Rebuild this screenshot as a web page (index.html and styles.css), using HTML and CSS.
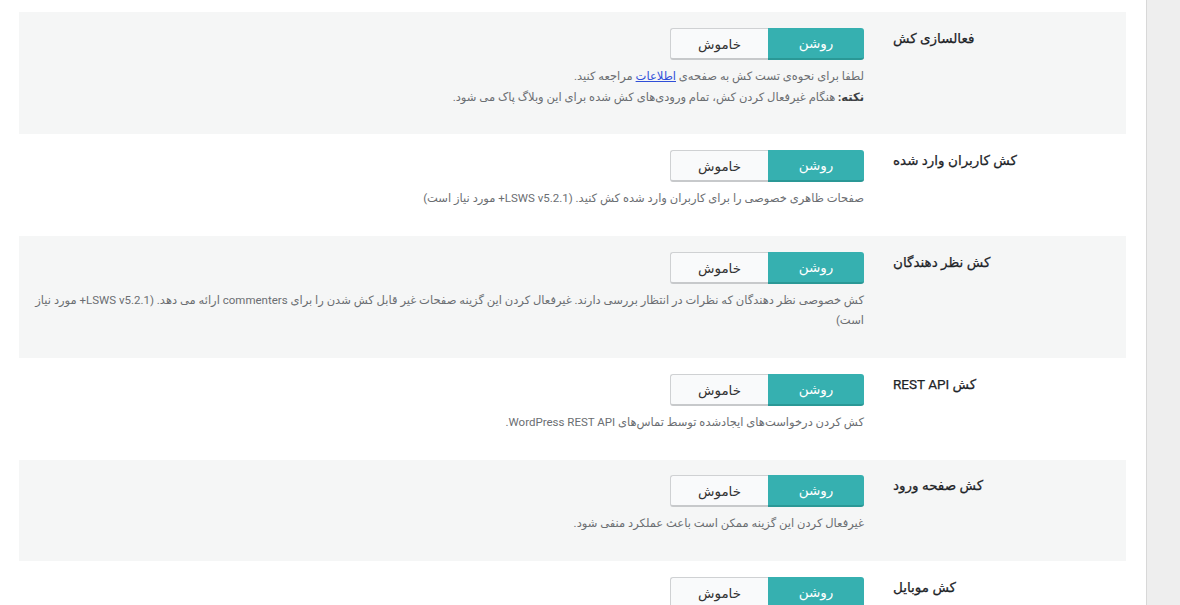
FILE: index.html
```html
<!DOCTYPE html>
<html lang="fa" dir="rtl">
<head>
<meta charset="utf-8">
<link rel="stylesheet" href="styles.css">
</head>
<body>
<div class="page">
  <aside class="side"></aside>
  <main class="main">
    <div class="row alt first">
      <div class="label">فعالسازی کش</div>
      <div class="field">
        <div class="toggle"><span class="on">روشن</span><span class="off">خاموش</span></div>
        <div class="desc">
          <p>لطفا برای نحوه‌ی تست کش به صفحه‌ی <a href="#">اطلاعات</a> مراجعه کنید.</p>
          <p><b>نکته:</b> هنگام غیرفعال کردن کش، تمام ورودی‌های کش شده برای این وبلاگ پاک می شود.</p>
        </div>
      </div>
    </div>
    <div class="row">
      <div class="label">کش کاربران وارد شده</div>
      <div class="field">
        <div class="toggle"><span class="on">روشن</span><span class="off">خاموش</span></div>
        <div class="desc"><p>صفحات ظاهری خصوصی را برای کاربران وارد شده کش کنید. (LSWS v5.2.1+ مورد نیاز است)</p></div>
      </div>
    </div>
    <div class="row alt">
      <div class="label">کش نظر دهندگان</div>
      <div class="field">
        <div class="toggle"><span class="on">روشن</span><span class="off">خاموش</span></div>
        <div class="desc"><p>کش خصوصی نظر دهندگان که نظرات در انتظار بررسی دارند. غیرفعال کردن این گزینه صفحات غیر قابل کش شدن را برای commenters ارائه می دهد. (LSWS v5.2.1+ مورد نیاز است)</p></div>
      </div>
    </div>
    <div class="row">
      <div class="label">کش REST API</div>
      <div class="field">
        <div class="toggle"><span class="on">روشن</span><span class="off">خاموش</span></div>
        <div class="desc"><p>کش کردن درخواست‌های ایجادشده توسط تماس‌های WordPress REST API.</p></div>
      </div>
    </div>
    <div class="row alt short">
      <div class="label">کش صفحه ورود</div>
      <div class="field">
        <div class="toggle"><span class="on">روشن</span><span class="off">خاموش</span></div>
        <div class="desc"><p>غیرفعال کردن این گزینه ممکن است باعث عملکرد منفی شود.</p></div>
      </div>
    </div>
    <div class="row">
      <div class="label">کش موبایل</div>
      <div class="field">
        <div class="toggle"><span class="on">روشن</span><span class="off">خاموش</span></div>
        <div class="desc"><p>ارائه نسخه جداگانه کش برای بازدیدکنندگان موبایل.</p></div>
      </div>
    </div>
  </main>
</div>
</body>
</html>
```

FILE: styles.css
```css
html, body {
  margin: 0;
  padding: 0;
  height: 100%;
  overflow: hidden;
  background: #fff;
}
body {
  font-family: Roboto, "DejaVu Sans", sans-serif;
  color: #23282d;
}
.page {
  display: flex;
  flex-direction: row;
  height: 605px;
}
.side {
  width: 33px;
  flex: none;
  background: #eeeeee;
  border-left: 1px solid #d8d8d8;
}
.main {
  flex: 1;
  padding: 12px 20px 0 19px;
  background: #fff;
}
.row {
  display: grid;
  grid-template-columns: 233px 1fr;
  column-gap: 29px;
  padding: 16px 0 16px 10px;
}
.row.first {
  padding-top: 16px;
  padding-bottom: 15px;
}
.row.short {
  padding-top: 15px;
}
.row.alt {
  background: #f5f6f6;
}
.label {
  text-align: left;
  font-size: 13.5px;
  font-weight: normal;
  line-height: 20px;
  color: #1d2327;
  -webkit-text-stroke: 0.25px #1d2327;
}
.toggle {
  display: inline-flex;
  height: 32px;
  width: 194px;
  box-sizing: border-box;
  font-size: 13.5px;
}
.toggle span {
  display: flex;
  align-items: center;
  justify-content: center;
  box-sizing: border-box;
}
.toggle .on {
  width: 96px;
  background: #36b0b0;
  color: #fff;
  border-radius: 0 3px 3px 0;
  border-bottom: 2px solid #2a9896;
}
.toggle .off {
  width: 98px;
  background: #f9fafb;
  color: #333;
  border: 1px solid #cfd1d3;
  border-bottom: 2px solid #c7c9cb;
  border-right: none;
  border-radius: 3px 0 0 3px;
}
.desc {
  margin: 6px 0 12px;
  font-size: 11.5px;
  line-height: 20px;
  color: #6b6e72;
}
.first .desc p {
  line-height: 20.5px;
}
.desc p {
  margin: 0;
}
.desc b {
  color: #3c4043;
}
.desc a {
  color: #2f4fd8;
  text-decoration: underline;
}
```
